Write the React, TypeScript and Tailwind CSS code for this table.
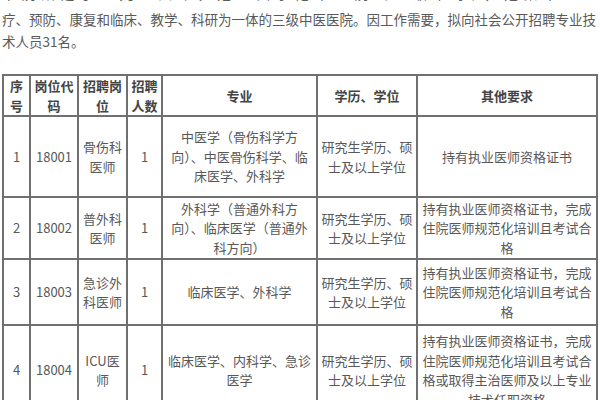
const font = { fontFamily: '"Noto Sans CJK SC", "Noto Sans", sans-serif' }

type Row = {
  no: string
  code: string
  post: string[]
  count: string
  major: string[]
  degree: string[]
  other: string[]
  h: string
}

const degree = ["研究生学历、硕", "士及以上学位"]
const training = ["持有执业医师资格证书，完成", "住院医师规范化培训且考试合", "格"]

const rows: Row[] = [
  {
    no: "1",
    code: "18001",
    post: ["骨伤科", "医师"],
    count: "1",
    major: ["中医学（骨伤科学方", "向）、中医骨伤科学、临", "床医学、外科学"],
    degree,
    other: ["持有执业医师资格证书"],
    h: "h-[81px]",
  },
  {
    no: "2",
    code: "18002",
    post: ["普外科", "医师"],
    count: "1",
    major: ["外科学（普通外科方", "向）、临床医学（普通外", "科方向）"],
    degree,
    other: training,
    h: "h-[62px]",
  },
  {
    no: "3",
    code: "18003",
    post: ["急诊外", "科医师"],
    count: "1",
    major: ["临床医学、外科学"],
    degree,
    other: training,
    h: "h-[66px]",
  },
  {
    no: "4",
    code: "18004",
    post: ["ICU医", "师"],
    count: "1",
    major: ["临床医学、内科学、急诊", "医学"],
    degree,
    other: ["持有执业医师资格证书，完成", "住院医师规范化培训且考试合", "格或取得主治医师及以上专业", "技术任职资格"],
    h: "h-[90px]",
  },
]

function Lines({ lines }: { lines: string[] }) {
  return (
    <>
      {lines.map((l, i) => (
        <div key={i} className="whitespace-nowrap">
          {l}
        </div>
      ))}
    </>
  )
}

const cell = "border-2 border-[#707070] p-0 text-center align-middle"

export default function App() {
  return (
    <div className="h-[400px] w-[600px] overflow-hidden bg-white text-[#585858]" style={font}>
      {/* intro paragraph, first line cut off by the top edge */}
      <div className="w-[596px] pl-[2px] text-[13.5px] leading-[22px] text-[#5a5a5a]">
        <div className="-mt-[18px] overflow-hidden whitespace-nowrap [text-align-last:justify]">
          本院始建于一九五六年，是全国示范中医院（三级甲等），是集中医医
        </div>
        <div className="mt-[4px] overflow-hidden whitespace-nowrap [text-align-last:justify]">
          疗、预防、康复和临床、教学、科研为一体的三级中医医院。因工作需要，拟向社会公开招聘专业技
        </div>
        <div className="whitespace-nowrap">术人员31名。</div>
      </div>

      <table className="ml-[2px] mt-[22px] w-[596px] table-fixed border-collapse text-[13px] leading-[19.5px]">
        <colgroup>
          <col className="w-[27px]" />
          <col className="w-[48px]" />
          <col className="w-[49px]" />
          <col className="w-[35px]" />
          <col className="w-[155px]" />
          <col className="w-[100px]" />
          <col className="w-[180px]" />
        </colgroup>
        <thead>
          <tr className="h-[41px] font-medium text-[#444]">
            <th className={cell}>
              <Lines lines={["序", "号"]} />
            </th>
            <th className={cell}>
              <Lines lines={["岗位代", "码"]} />
            </th>
            <th className={cell}>
              <Lines lines={["招聘岗", "位"]} />
            </th>
            <th className={cell}>
              <Lines lines={["招聘", "人数"]} />
            </th>
            <th className={cell}>专业</th>
            <th className={cell}>学历、学位</th>
            <th className={cell}>其他要求</th>
          </tr>
        </thead>
        <tbody>
          {rows.map((r) => (
            <tr key={r.no} className={r.h}>
              <td className={cell}>{r.no}</td>
              <td className={cell}>{r.code}</td>
              <td className={cell}>
                <Lines lines={r.post} />
              </td>
              <td className={cell}>{r.count}</td>
              <td className={cell}>
                <Lines lines={r.major} />
              </td>
              <td className={cell}>
                <Lines lines={r.degree} />
              </td>
              <td className={cell}>
                <Lines lines={r.other} />
              </td>
            </tr>
          ))}
        </tbody>
      </table>
    </div>
  )
}
